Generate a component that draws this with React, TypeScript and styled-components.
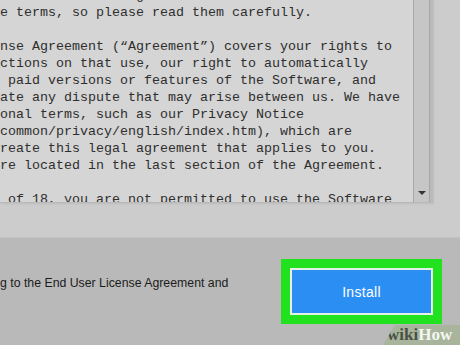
import React from "react";
import styled, { createGlobalStyle } from "styled-components";

const Global = createGlobalStyle`
  html, body { margin: 0; padding: 0; background: #cdcdcd; }
  body { width: 460px; height: 345px; overflow: hidden; }
`;

const Screen = styled.div`
  position: relative;
  width: 460px;
  height: 345px;
  display: flex;
  flex-direction: column;
  overflow: hidden;
  font-family: "Liberation Sans", Arial, sans-serif;
`;

const TopArea = styled.div`
  height: 237px;
  flex: none;
  background: #cccccc;
  display: flex;
  align-items: flex-start;
`;

const LicensePanel = styled.div`
  width: 433px;
  height: 203px;
  display: flex;
  background: #d5d5d5;
  border-bottom: 1px solid #b9b9b9;
  box-shadow: 1px 1px 2px rgba(0, 0, 0, 0.08);
  box-sizing: border-box;
`;

const LicenseText = styled.div`
  flex: 1;
  overflow: hidden;
  font-family: "Liberation Mono", "Courier New", monospace;
  font-size: 13.33px;
  line-height: 17px;
  color: #2e2e2e;
  white-space: pre;
`;

const TextScroll = styled.div`
  margin-top: -13px;
`;

const Line = styled.div`
  height: 17px;
`;

const Scrollbar = styled.div`
  width: 20px;
  flex: none;
  display: flex;
  flex-direction: column;
  justify-content: flex-end;
  align-items: center;
  background: #c6c6c6;
  border-left: 1px solid #a9a9a9;
  border-right: 3px solid #bababa;
  box-shadow: inset -1px 0 0 #a6a6a6;
  box-sizing: border-box;
  padding-bottom: 7px;
`;

const DownArrow = styled.div`
  width: 0;
  height: 0;
  border-left: 4px solid transparent;
  border-right: 4px solid transparent;
  border-top: 4px solid #333;
  margin-right: 1px;
`;

const BottomBar = styled.div`
  flex: 1;
  background: #b9b9b9;
  border-top: 1px solid #c2c2c2;
  display: flex;
  justify-content: space-between;
  align-items: flex-start;
  padding: 21px 18px 0 0;
`;

const AgreeText = styled.div`
  margin-top: 16px;
  font-size: 12.3px;
  line-height: 16px;
  color: #1c1c1c;
  white-space: nowrap;
`;

const Highlight = styled.div`
  width: 161px;
  height: 65px;
  box-sizing: border-box;
  border: 9px solid #22e11e;
  display: flex;
`;

const InstallButton = styled.button`
  flex: 1;
  margin: 0;
  border: 2px solid #e3f2e3;
  background: #2b8ef3;
  color: #ffffff;
  font-family: "Liberation Sans", Arial, sans-serif;
  font-size: 14px;
  letter-spacing: 0.3px;
  padding: 0;
  display: flex;
  align-items: center;
  justify-content: center;
`;

const Watermark = styled.div`
  position: absolute;
  right: 0;
  bottom: 0;
  width: 77px;
  height: 20px;
  background: #a8b59c;
  clip-path: polygon(12px 0, 100% 0, 100% 100%, 0 100%);
  display: flex;
  align-items: center;
  padding-left: 4px;
  box-sizing: border-box;
  font-family: "Liberation Serif", "Times New Roman", serif;
  font-weight: bold;
  font-size: 17px;
  line-height: 20px;
`;

const WikiPart = styled.span<{ $light?: boolean }>`
  color: ${(p) => (p.$light ? "#f4f6f1" : "#4b5146")};
`;

const lines = [
  "ent. This is a legal document that contains the",
  "e terms, so please read them carefully.",
  "",
  "nse Agreement (\u201cAgreement\u201d) covers your rights to",
  "ctions on that use, our right to automatically",
  " paid versions or features of the Software, and",
  "ate any dispute that may arise between us. We have",
  "onal terms, such as our Privacy Notice",
  "common/privacy/english/index.htm), which are",
  "reate this legal agreement that applies to you.",
  "re located in the last section of the Agreement.",
  "",
  " of 18, you are not permitted to use the Software",
];

export default function App() {
  return (
    <Screen>
      <Global />
      <TopArea>
        <LicensePanel>
          <LicenseText>
            <TextScroll>
              {lines.map((l, i) => (
                <Line key={i}>{l}</Line>
              ))}
            </TextScroll>
          </LicenseText>
          <Scrollbar>
            <DownArrow />
          </Scrollbar>
        </LicensePanel>
      </TopArea>
      <BottomBar>
        <AgreeText>g to the End User License Agreement and</AgreeText>
        <Highlight>
          <InstallButton>Install</InstallButton>
        </Highlight>
      </BottomBar>
      <Watermark>
        <WikiPart>wiki</WikiPart>
        <WikiPart $light>How</WikiPart>
      </Watermark>
    </Screen>
  );
}
